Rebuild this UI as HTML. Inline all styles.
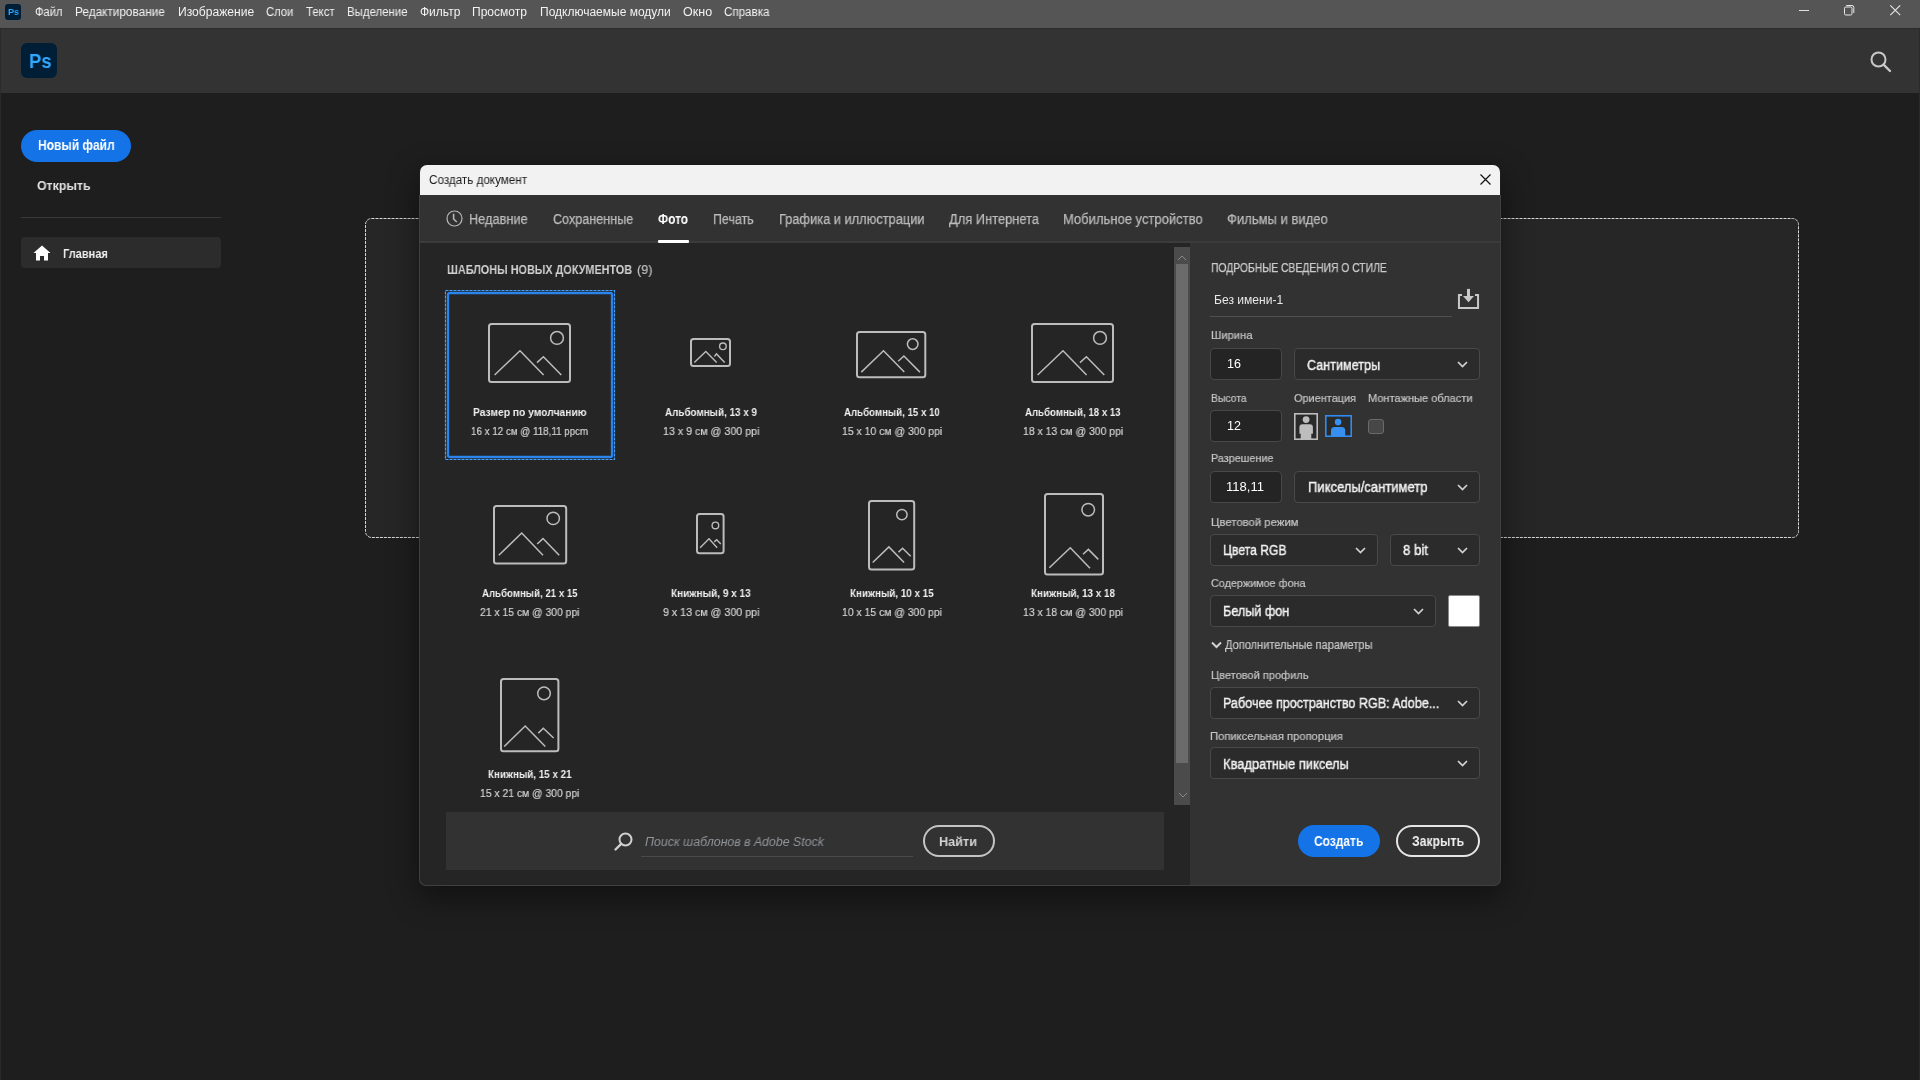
<!DOCTYPE html><html><head><meta charset="utf-8"><style>
*{margin:0;padding:0;box-sizing:border-box}
html,body{width:1920px;height:1080px;overflow:hidden;background:#1e1e1e;font-family:"Liberation Sans",sans-serif}
.a{position:absolute}
.t{position:absolute;white-space:nowrap;line-height:1;transform-origin:0 0;will-change:transform}
svg{position:absolute;overflow:visible}
.dd{position:absolute;border:1px solid #494949;border-radius:4px;background:#2b2b2b}
.inp{position:absolute;border:1px solid #484848;border-radius:4px;background:#242424}
</style></head><body><div class="a" style="left:0;top:0;width:1920px;height:28px;background:#555555"></div><div class="a" style="left:5px;top:4px;width:16px;height:16px;background:#001e36;border-radius:3px"></div><span class="t" style="left:7.50px;top:6.96px;font-size:9.5px;font-weight:700;color:#31a8ff;transform:scaleX(0.9462)">Ps</span><span class="t" style="left:35.00px;top:5.84px;font-size:12px;font-weight:400;color:#f2f2f2;transform:scaleX(0.9317)">Файл</span><span class="t" style="left:75.40px;top:5.84px;font-size:12px;font-weight:400;color:#f2f2f2;transform:scaleX(0.9823)">Редактирование</span><span class="t" style="left:177.50px;top:5.84px;font-size:12px;font-weight:400;color:#f2f2f2;transform:scaleX(1.0087)">Изображение</span><span class="t" style="left:266.00px;top:5.84px;font-size:12px;font-weight:400;color:#f2f2f2;transform:scaleX(0.9353)">Слои</span><span class="t" style="left:306.00px;top:5.84px;font-size:12px;font-weight:400;color:#f2f2f2;transform:scaleX(0.9464)">Текст</span><span class="t" style="left:347.30px;top:5.84px;font-size:12px;font-weight:400;color:#f2f2f2;transform:scaleX(0.9514)">Выделение</span><span class="t" style="left:419.70px;top:5.84px;font-size:12px;font-weight:400;color:#f2f2f2;transform:scaleX(0.9898)">Фильтр</span><span class="t" style="left:472.40px;top:5.84px;font-size:12px;font-weight:400;color:#f2f2f2;transform:scaleX(1.0034)">Просмотр</span><span class="t" style="left:540.30px;top:5.84px;font-size:12px;font-weight:400;color:#f2f2f2;transform:scaleX(0.9973)">Подключаемые модули</span><span class="t" style="left:682.60px;top:5.84px;font-size:12px;font-weight:400;color:#f2f2f2;transform:scaleX(1.0434)">Окно</span><span class="t" style="left:723.80px;top:5.84px;font-size:12px;font-weight:400;color:#f2f2f2;transform:scaleX(0.9644)">Справка</span><div class="a" style="left:1799px;top:10px;width:10px;height:1px;background:#e0e0e0"></div><svg style="left:1844px;top:5px" width="11" height="11"><rect x="0.5" y="2" width="7.5" height="8" rx="1.3" fill="none" stroke="#e8e8e8" stroke-width="1"/><path d="M2.3 0.5 H8 Q9.8 0.5 9.8 2.3 V8" fill="none" stroke="#e8e8e8" stroke-width="1"/></svg><svg style="left:1890px;top:5px" width="11" height="11"><path d="M0.3 0.3 L10.2 10.2 M10.2 0.3 L0.3 10.2" stroke="#e8e8e8" stroke-width="1.1"/></svg><div class="a" style="left:0;top:28px;width:1920px;height:65px;background:#333333;border-top:1px solid #2b2b2b;border-left:1px solid #2b2b2b;border-right:1px solid #2b2b2b"></div><div class="a" style="left:21px;top:43px;width:36px;height:35px;background:#001e36;border-radius:6px"></div><span class="t" style="left:28.50px;top:51.15px;font-size:20.5px;font-weight:700;color:#31a8ff;transform:scaleX(0.8972)">Ps</span><svg style="left:1870px;top:51px" width="22" height="22"><circle cx="8.5" cy="8.5" r="7" fill="none" stroke="#c8c8c8" stroke-width="2"/><path d="M13.6 13.6 L20 20" stroke="#c8c8c8" stroke-width="2.4" stroke-linecap="round"/></svg><div class="a" style="left:0;top:93px;width:1px;height:987px;background:#2a2a2a"></div><div class="a" style="left:1919px;top:93px;width:1px;height:987px;background:#2a2a2a"></div><div class="a" style="left:21px;top:130px;width:110px;height:32px;background:#1473e6;border-radius:16px"></div><span class="t" style="left:37.60px;top:138.43px;font-size:14.5px;font-weight:700;color:#ffffff;transform:scaleX(0.8296)">Новый файл</span><span class="t" style="left:37.20px;top:179.30px;font-size:13px;font-weight:700;color:#e3e3e3;transform:scaleX(0.9487)">Открыть</span><div class="a" style="left:21px;top:217px;width:200px;height:1px;background:#3a3a3a"></div><div class="a" style="left:21px;top:237px;width:200px;height:31px;background:#2c2c2c;border-radius:4px"></div><svg style="left:33px;top:245px" width="18" height="16"><path d="M9 0.5 L17.5 8 H15 V15.5 H11 V11 H7 V15.5 H3 V8 H0.5 Z" fill="#ffffff"/></svg><span class="t" style="left:62.90px;top:246.57px;font-size:13.5px;font-weight:700;color:#f0f0f0;transform:scaleX(0.8178)">Главная</span><svg style="left:365px;top:218px" width="1434" height="320"><rect x="0.5" y="0.5" width="1433" height="319" rx="6" fill="#262626" stroke="#d6d6d6" stroke-width="1" stroke-dasharray="3 1"/></svg><div class="a" style="left:419px;top:165px;width:1082px;height:721px;border-radius:7px;box-shadow:0 10px 30px 2px rgba(0,0,0,0.42)"></div><div class="a" style="left:420px;top:165px;width:1080px;height:30px;background:#f2f2f2;border-radius:7px 7px 0 0"></div><span class="t" style="left:429.40px;top:173.84px;font-size:12px;font-weight:400;color:#1b1b1b;transform:scaleX(0.9720)">Создать документ</span><svg style="left:1480px;top:174px" width="11" height="11"><path d="M0.5 0.5 L10.5 10.5 M10.5 0.5 L0.5 10.5" stroke="#111" stroke-width="1.2"/></svg><div class="a" style="left:419px;top:195px;width:1082px;height:691px;background:#323232;border:1px solid #404040;border-top:none;border-radius:0 0 7px 7px"></div><div class="a" style="left:420px;top:241px;width:1080px;height:2px;background:#3b3b3b"></div><svg style="left:446px;top:210px" width="18" height="18"><circle cx="8.5" cy="8.5" r="7.5" fill="none" stroke="#b8b8b8" stroke-width="1.2"/><path d="M7.6 3.8 V9 L10.8 12" fill="none" stroke="#b8b8b8" stroke-width="1.6"/></svg><span class="t" style="left:469.20px;top:212.15px;font-size:14px;font-weight:400;color:#bcbcbc;transform:scaleX(0.9125);-webkit-text-stroke:0.25px #bcbcbc">Недавние</span><span class="t" style="left:553.00px;top:212.15px;font-size:14px;font-weight:400;color:#bcbcbc;transform:scaleX(0.9008);-webkit-text-stroke:0.25px #bcbcbc">Сохраненные</span><span class="t" style="left:658.00px;top:212.15px;font-size:14px;font-weight:700;color:#ffffff;transform:scaleX(0.8477)">Фото</span><span class="t" style="left:713.30px;top:212.15px;font-size:14px;font-weight:400;color:#bcbcbc;transform:scaleX(0.8872);-webkit-text-stroke:0.25px #bcbcbc">Печать</span><span class="t" style="left:778.90px;top:212.15px;font-size:14px;font-weight:400;color:#bcbcbc;transform:scaleX(0.9161);-webkit-text-stroke:0.25px #bcbcbc">Графика и иллюстрации</span><span class="t" style="left:948.70px;top:212.15px;font-size:14px;font-weight:400;color:#bcbcbc;transform:scaleX(0.9198);-webkit-text-stroke:0.25px #bcbcbc">Для Интернета</span><span class="t" style="left:1063.30px;top:212.15px;font-size:14px;font-weight:400;color:#bcbcbc;transform:scaleX(0.9292);-webkit-text-stroke:0.25px #bcbcbc">Мобильное устройство</span><span class="t" style="left:1226.60px;top:212.15px;font-size:14px;font-weight:400;color:#bcbcbc;transform:scaleX(0.9305);-webkit-text-stroke:0.25px #bcbcbc">Фильмы и видео</span><div class="a" style="left:658px;top:240px;width:31px;height:3px;background:#ffffff;border-radius:1px"></div><div class="a" style="left:420px;top:243px;width:770px;height:642px;background:#252525;border-radius:0 0 0 7px"></div><div class="a" style="left:1190px;top:243px;width:310px;height:642px;background:#323232;border-radius:0 0 7px 0"></div><span class="t" style="left:446.50px;top:263.20px;font-size:13px;font-weight:700;color:#d0d0d0;transform:scaleX(0.8335)">ШАБЛОНЫ НОВЫХ ДОКУМЕНТОВ</span><span class="t" style="left:637.00px;top:263.20px;font-size:13px;font-weight:400;color:#c0c0c0;transform:scaleX(0.9754);-webkit-text-stroke:0.2px #c0c0c0">(9)</span><svg style="left:445px;top:290px" width="170" height="170"><rect x="0.5" y="0.5" width="169" height="169" fill="none" stroke="#45a0ff" stroke-width="1.2" stroke-dasharray="3 1"/><rect x="3" y="3" width="164" height="164" rx="1.5" fill="none" stroke="#2a84ee" stroke-width="2.3"/></svg><svg style="left:488.3px;top:323.0px" width="83.0" height="60.0"><rect x="1.0" y="1.0" width="81.0" height="58.0" rx="2.5" fill="none" stroke="#bcbcbc" stroke-width="2"/><circle cx="69.0" cy="14.9" r="6.4" fill="none" stroke="#bcbcbc" stroke-width="1.5"/><path d="M6.6 52.0 L32.0 27.8 L55.6 52.0 M49.0 39.6 L55.4 33.7 L73.3 52.0" fill="none" stroke="#bcbcbc" stroke-width="1.5"/></svg><svg style="left:690.0px;top:338.0px" width="41.0" height="29.0"><rect x="1.0" y="1.0" width="39.0" height="27.0" rx="2.5" fill="none" stroke="#bcbcbc" stroke-width="2"/><circle cx="32.9" cy="8.3" r="3.3" fill="none" stroke="#bcbcbc" stroke-width="1.4"/><path d="M4.3 24.5 L15.8 13.4 L26.7 24.5 M24.4 18.5 L26.5 15.9 L34.7 24.5" fill="none" stroke="#bcbcbc" stroke-width="1.4"/></svg><svg style="left:856.4px;top:330.8px" width="70.3" height="47.3"><rect x="1.0" y="1.0" width="68.3" height="45.3" rx="2.5" fill="none" stroke="#bcbcbc" stroke-width="2"/><circle cx="56.7" cy="13.1" r="5.3" fill="none" stroke="#bcbcbc" stroke-width="1.5"/><path d="M5.3 41.1 L27.5 19.8 L48.3 41.1 M42.2 30.3 L47.9 25.0 L63.9 41.1" fill="none" stroke="#bcbcbc" stroke-width="1.5"/></svg><svg style="left:1031.3px;top:323.2px" width="83.0" height="60.0"><rect x="1.0" y="1.0" width="81.0" height="58.0" rx="2.5" fill="none" stroke="#bcbcbc" stroke-width="2"/><circle cx="69.0" cy="14.9" r="6.4" fill="none" stroke="#bcbcbc" stroke-width="1.5"/><path d="M6.6 52.0 L32.0 27.8 L55.6 52.0 M49.0 39.6 L55.4 33.7 L73.3 52.0" fill="none" stroke="#bcbcbc" stroke-width="1.5"/></svg><svg style="left:492.5px;top:504.7px" width="74.2" height="59.6"><rect x="1.0" y="1.0" width="72.2" height="57.6" rx="2.5" fill="none" stroke="#bcbcbc" stroke-width="2"/><circle cx="60.2" cy="13.4" r="6.2" fill="none" stroke="#bcbcbc" stroke-width="1.5"/><path d="M5.8 50.3 L28.7 28.0 L50.0 50.3 M44.2 39.0 L50.0 33.6 L66.2 50.3" fill="none" stroke="#bcbcbc" stroke-width="1.5"/></svg><svg style="left:696.3px;top:512.8px" width="28.6" height="41.2"><rect x="1.0" y="1.0" width="26.6" height="39.2" rx="2.5" fill="none" stroke="#bcbcbc" stroke-width="2"/><circle cx="19.4" cy="12.4" r="3.3" fill="none" stroke="#bcbcbc" stroke-width="1.4"/><path d="M4.1 34.7 L13.0 25.8 L21.2 34.7 M18.3 28.9 L20.7 26.8 L24.8 31.1" fill="none" stroke="#bcbcbc" stroke-width="1.4"/></svg><svg style="left:868.0px;top:500.3px" width="47.2" height="70.6"><rect x="1.0" y="1.0" width="45.2" height="68.6" rx="2.5" fill="none" stroke="#bcbcbc" stroke-width="2"/><circle cx="33.9" cy="14.6" r="5.2" fill="none" stroke="#bcbcbc" stroke-width="1.5"/><path d="M4.7 62.5 L20.9 46.9 L36.1 62.5 M30.5 52.1 L34.6 48.2 L42.7 56.2" fill="none" stroke="#bcbcbc" stroke-width="1.5"/></svg><svg style="left:1043.7px;top:493.1px" width="60.0" height="82.6"><rect x="1.0" y="1.0" width="58.0" height="80.6" rx="2.5" fill="none" stroke="#bcbcbc" stroke-width="2"/><circle cx="44.2" cy="16.7" r="6.3" fill="none" stroke="#bcbcbc" stroke-width="1.5"/><path d="M5.3 74.8 L26.3 54.7 L46.0 75.2 M39.0 61.2 L44.4 56.4 L54.3 66.4" fill="none" stroke="#bcbcbc" stroke-width="1.5"/></svg><svg style="left:500.0px;top:678.4px" width="59.4" height="74.2"><rect x="1.0" y="1.0" width="57.4" height="72.2" rx="2.5" fill="none" stroke="#bcbcbc" stroke-width="2"/><circle cx="44.0" cy="15.4" r="6.3" fill="none" stroke="#bcbcbc" stroke-width="1.5"/><path d="M4.2 68.5 L25.2 48.0 L45.3 68.5 M38.3 55.1 L43.3 50.2 L53.6 60.0" fill="none" stroke="#bcbcbc" stroke-width="1.5"/></svg><span class="t" style="left:473.25px;top:407.47px;font-size:11.5px;font-weight:700;color:#efefef;transform:scaleX(0.8934)">Размер по умолчанию</span><span class="t" style="left:471.40px;top:425.77px;font-size:11.5px;font-weight:400;color:#d2d2d2;transform:scaleX(0.8528);-webkit-text-stroke:0.2px #d2d2d2">16 x 12 см @ 118,11 ppcm</span><span class="t" style="left:665.05px;top:407.47px;font-size:11.5px;font-weight:700;color:#efefef;transform:scaleX(0.8559)">Альбомный, 13 x 9</span><span class="t" style="left:662.80px;top:425.77px;font-size:11.5px;font-weight:400;color:#d2d2d2;transform:scaleX(0.9271);-webkit-text-stroke:0.2px #d2d2d2">13 x 9 см @ 300 ppi</span><span class="t" style="left:844.10px;top:407.47px;font-size:11.5px;font-weight:700;color:#efefef;transform:scaleX(0.8421)">Альбомный, 15 x 10</span><span class="t" style="left:841.90px;top:425.77px;font-size:11.5px;font-weight:400;color:#d2d2d2;transform:scaleX(0.9078);-webkit-text-stroke:0.2px #d2d2d2">15 x 10 см @ 300 ppi</span><span class="t" style="left:1025.20px;top:407.47px;font-size:11.5px;font-weight:700;color:#efefef;transform:scaleX(0.8403)">Альбомный, 18 x 13</span><span class="t" style="left:1022.90px;top:425.77px;font-size:11.5px;font-weight:400;color:#d2d2d2;transform:scaleX(0.9078);-webkit-text-stroke:0.2px #d2d2d2">18 x 13 см @ 300 ppi</span><span class="t" style="left:482.20px;top:588.47px;font-size:11.5px;font-weight:700;color:#efefef;transform:scaleX(0.8403)">Альбомный, 21 x 15</span><span class="t" style="left:480.25px;top:606.77px;font-size:11.5px;font-weight:400;color:#d2d2d2;transform:scaleX(0.9015);-webkit-text-stroke:0.2px #d2d2d2">21 x 15 см @ 300 ppi</span><span class="t" style="left:671.15px;top:588.47px;font-size:11.5px;font-weight:700;color:#efefef;transform:scaleX(0.8721)">Книжный, 9 x 13</span><span class="t" style="left:662.80px;top:606.77px;font-size:11.5px;font-weight:400;color:#d2d2d2;transform:scaleX(0.9271);-webkit-text-stroke:0.2px #d2d2d2">9 x 13 см @ 300 ppi</span><span class="t" style="left:850.20px;top:588.47px;font-size:11.5px;font-weight:700;color:#efefef;transform:scaleX(0.8548)">Книжный, 10 x 15</span><span class="t" style="left:842.05px;top:606.77px;font-size:11.5px;font-weight:400;color:#d2d2d2;transform:scaleX(0.9051);-webkit-text-stroke:0.2px #d2d2d2">10 x 15 см @ 300 ppi</span><span class="t" style="left:1031.05px;top:588.47px;font-size:11.5px;font-weight:700;color:#efefef;transform:scaleX(0.8579)">Книжный, 13 x 18</span><span class="t" style="left:1023.05px;top:606.77px;font-size:11.5px;font-weight:400;color:#d2d2d2;transform:scaleX(0.9051);-webkit-text-stroke:0.2px #d2d2d2">13 x 18 см @ 300 ppi</span><span class="t" style="left:488.25px;top:769.47px;font-size:11.5px;font-weight:700;color:#efefef;transform:scaleX(0.8538)">Книжный, 15 x 21</span><span class="t" style="left:480.30px;top:787.77px;font-size:11.5px;font-weight:400;color:#d2d2d2;transform:scaleX(0.9006);-webkit-text-stroke:0.2px #d2d2d2">15 x 21 см @ 300 ppi</span><div class="a" style="left:1174px;top:247px;width:16px;height:558px;background:#4b4b4b"></div><div class="a" style="left:1176px;top:264px;width:12px;height:499px;background:#6b6b6b"></div><svg style="left:1177px;top:255px" width="10" height="6"><path d="M1 5 L5 1 L9 5" fill="none" stroke="#8a8a8a" stroke-width="1"/></svg><svg style="left:1178px;top:792px" width="10" height="6"><path d="M1 1 L5 5 L9 1" fill="none" stroke="#8a8a8a" stroke-width="1"/></svg><div class="a" style="left:446px;top:812px;width:718px;height:58px;background:#323232"></div><svg style="left:614px;top:832px" width="20" height="19"><circle cx="11.5" cy="7.5" r="6" fill="none" stroke="#d0d0d0" stroke-width="2"/><path d="M7.2 11.8 L1.5 17.5" stroke="#d0d0d0" stroke-width="2.4" stroke-linecap="round"/></svg><span class="t" style="left:644.80px;top:835.72px;font-size:12.5px;font-weight:400;font-style:italic;color:#90959a;transform:scaleX(0.9857)">Поиск шаблонов в Adobe Stock</span><div class="a" style="left:641px;top:856px;width:272px;height:1px;background:#4a4a4a"></div><div class="a" style="left:923px;top:825px;width:72px;height:32px;border:2px solid #c4c4c4;border-radius:16px"></div><span class="t" style="left:939.30px;top:834.57px;font-size:13.5px;font-weight:700;color:#d4d4d4;transform:scaleX(0.9365)">Найти</span><span class="t" style="left:1210.50px;top:261.92px;font-size:12.5px;font-weight:400;color:#cbcbcb;transform:scaleX(0.8260);-webkit-text-stroke:0.25px #cbcbcb">ПОДРОБНЫЕ СВЕДЕНИЯ О СТИЛЕ</span><span class="t" style="left:1213.75px;top:294.09px;font-size:12px;font-weight:400;color:#e8e8e8;transform:scaleX(1.0073)">Без имени-1</span><div class="a" style="left:1210px;top:316px;width:242px;height:1px;background:#4f4f4f"></div><svg style="left:1457px;top:288px" width="23" height="22"><path d="M5 6.9 H1.95 V20.05 H21.05 V6.9 H18" fill="none" stroke="#c8c8c8" stroke-width="2"/><path d="M11.5 0.9 V9" stroke="#c8c8c8" stroke-width="3"/><path d="M6 8 L17 8 L11.5 14.3 Z" fill="#c8c8c8"/></svg><span class="t" style="left:1210.50px;top:330.27px;font-size:11.5px;font-weight:400;color:#c6c6c6;transform:scaleX(0.9758);-webkit-text-stroke:0.2px #c6c6c6">Ширина</span><div class="inp" style="left:1210px;top:348px;width:72px;height:32px"></div><span class="t" style="left:1226.90px;top:357.92px;font-size:12.5px;font-weight:400;color:#ffffff;transform:scaleX(0.9780)">16</span><div class="dd" style="left:1294px;top:348px;width:186px;height:32px"></div><svg style="left:1457px;top:361px" width="11" height="7"><path d="M1 1 L5.5 5.5 L10 1" fill="none" stroke="#d2d2d2" stroke-width="1.7"/></svg><span class="t" style="left:1307.00px;top:357.65px;font-size:14px;font-weight:400;color:#f2f2f2;transform:scaleX(0.8986);-webkit-text-stroke:0.4px #f2f2f2">Сантиметры</span><span class="t" style="left:1210.50px;top:393.27px;font-size:11.5px;font-weight:400;color:#c6c6c6;transform:scaleX(0.9038);-webkit-text-stroke:0.2px #c6c6c6">Высота</span><span class="t" style="left:1294.25px;top:393.27px;font-size:11.5px;font-weight:400;color:#c6c6c6;transform:scaleX(0.9495);-webkit-text-stroke:0.2px #c6c6c6">Ориентация</span><span class="t" style="left:1367.50px;top:393.27px;font-size:11.5px;font-weight:400;color:#c6c6c6;transform:scaleX(0.9595);-webkit-text-stroke:0.2px #c6c6c6">Монтажные области</span><div class="inp" style="left:1210px;top:410px;width:72px;height:32px"></div><span class="t" style="left:1226.90px;top:419.92px;font-size:12.5px;font-weight:400;color:#ffffff;transform:scaleX(0.9780)">12</span><svg style="left:1294px;top:413px" width="24" height="27"><rect x="0.8" y="0.8" width="22.4" height="25.4" fill="#2a2a2a" stroke="#bdbdbd" stroke-width="1.6"/><circle cx="12.1" cy="6.6" r="3.4" fill="#bdbdbd"/><path d="M5.4 20.7 V14.2 Q5.4 11.2 8.4 11.2 H15.9 Q18.9 11.2 18.9 14.2 V20.7 H17.3 V26.2 H6.7 V20.7 Z" fill="#bdbdbd"/></svg><svg style="left:1325px;top:415px" width="27" height="22"><rect x="0.8" y="0.8" width="25.4" height="20.4" fill="#2a2a2a" stroke="#2f8cf5" stroke-width="1.6"/><circle cx="13.1" cy="7.1" r="3.3" fill="#3790f0"/><path d="M6 21.2 V15.5 Q6 12 9.5 12 H16.7 Q20.2 12 20.2 15.5 V21.2 Z" fill="#3790f0"/></svg><div class="a" style="left:1368px;top:419px;width:16px;height:15px;border:1px solid #6a6a6a;border-radius:3px;background:#474747"></div><span class="t" style="left:1210.50px;top:453.27px;font-size:11.5px;font-weight:400;color:#c6c6c6;transform:scaleX(0.9410);-webkit-text-stroke:0.2px #c6c6c6">Разрешение</span><div class="inp" style="left:1210px;top:471px;width:72px;height:32px"></div><span class="t" style="left:1226.25px;top:480.62px;font-size:12.5px;font-weight:400;color:#ffffff;transform:scaleX(1.0442)">118,11</span><div class="dd" style="left:1294px;top:471px;width:186px;height:32px"></div><svg style="left:1457px;top:484px" width="11" height="7"><path d="M1 1 L5.5 5.5 L10 1" fill="none" stroke="#d2d2d2" stroke-width="1.7"/></svg><span class="t" style="left:1307.50px;top:480.15px;font-size:14px;font-weight:400;color:#f2f2f2;transform:scaleX(0.9298);-webkit-text-stroke:0.4px #f2f2f2">Пикселы/сантиметр</span><span class="t" style="left:1210.50px;top:516.52px;font-size:11.5px;font-weight:400;color:#c6c6c6;transform:scaleX(0.9863);-webkit-text-stroke:0.2px #c6c6c6">Цветовой режим</span><div class="dd" style="left:1210px;top:534px;width:168px;height:32px"></div><svg style="left:1355px;top:547px" width="11" height="7"><path d="M1 1 L5.5 5.5 L10 1" fill="none" stroke="#d2d2d2" stroke-width="1.7"/></svg><span class="t" style="left:1223.25px;top:543.15px;font-size:14px;font-weight:400;color:#f2f2f2;transform:scaleX(0.8664);-webkit-text-stroke:0.4px #f2f2f2">Цвета RGB</span><div class="dd" style="left:1390px;top:534px;width:90px;height:32px"></div><svg style="left:1457px;top:547px" width="11" height="7"><path d="M1 1 L5.5 5.5 L10 1" fill="none" stroke="#d2d2d2" stroke-width="1.7"/></svg><span class="t" style="left:1403.00px;top:543.15px;font-size:14px;font-weight:400;color:#f2f2f2;transform:scaleX(0.9445);-webkit-text-stroke:0.4px #f2f2f2">8 bit</span><span class="t" style="left:1210.50px;top:577.77px;font-size:11.5px;font-weight:400;color:#c6c6c6;transform:scaleX(0.9396);-webkit-text-stroke:0.2px #c6c6c6">Содержимое фона</span><div class="dd" style="left:1210px;top:595px;width:226px;height:32px"></div><svg style="left:1413px;top:608px" width="11" height="7"><path d="M1 1 L5.5 5.5 L10 1" fill="none" stroke="#d2d2d2" stroke-width="1.7"/></svg><span class="t" style="left:1223.25px;top:604.15px;font-size:14px;font-weight:400;color:#f2f2f2;transform:scaleX(0.9014);-webkit-text-stroke:0.4px #f2f2f2">Белый фон</span><div class="a" style="left:1448px;top:595px;width:32px;height:32px;background:#ffffff;border:1px solid #8a8a8a;border-radius:2px"></div><svg style="left:1211px;top:641px" width="11" height="8"><path d="M1 1.5 L5.5 6 L10 1.5" fill="none" stroke="#d0d0d0" stroke-width="2"/></svg><span class="t" style="left:1225.00px;top:639.09px;font-size:12px;font-weight:400;color:#c8c8c8;transform:scaleX(0.9209);-webkit-text-stroke:0.2px #c8c8c8">Дополнительные параметры</span><span class="t" style="left:1210.50px;top:669.77px;font-size:11.5px;font-weight:400;color:#c6c6c6;transform:scaleX(0.9593);-webkit-text-stroke:0.2px #c6c6c6">Цветовой профиль</span><div class="dd" style="left:1210px;top:687px;width:270px;height:32px"></div><svg style="left:1457px;top:700px" width="11" height="7"><path d="M1 1 L5.5 5.5 L10 1" fill="none" stroke="#d2d2d2" stroke-width="1.7"/></svg><span class="t" style="left:1223.25px;top:696.15px;font-size:14px;font-weight:400;color:#f2f2f2;transform:scaleX(0.8986);-webkit-text-stroke:0.4px #f2f2f2">Рабочее пространство RGB: Adobe...</span><span class="t" style="left:1210.20px;top:730.57px;font-size:11.5px;font-weight:400;color:#c6c6c6;transform:scaleX(0.9737);-webkit-text-stroke:0.2px #c6c6c6">Попиксельная пропорция</span><div class="dd" style="left:1210px;top:747px;width:270px;height:32px"></div><svg style="left:1457px;top:760px" width="11" height="7"><path d="M1 1 L5.5 5.5 L10 1" fill="none" stroke="#d2d2d2" stroke-width="1.7"/></svg><span class="t" style="left:1223.40px;top:756.65px;font-size:14px;font-weight:400;color:#f2f2f2;transform:scaleX(0.9197);-webkit-text-stroke:0.4px #f2f2f2">Квадратные пикселы</span><div class="a" style="left:1298px;top:825px;width:82px;height:32px;background:#1473e6;border-radius:16px"></div><span class="t" style="left:1314.00px;top:833.95px;font-size:14px;font-weight:700;color:#ffffff;transform:scaleX(0.8562)">Создать</span><div class="a" style="left:1396px;top:825px;width:84px;height:32px;border:2px solid #e6e6e6;border-radius:16px"></div><span class="t" style="left:1412.00px;top:833.95px;font-size:14px;font-weight:700;color:#f0f0f0;transform:scaleX(0.8733)">Закрыть</span></body></html>
